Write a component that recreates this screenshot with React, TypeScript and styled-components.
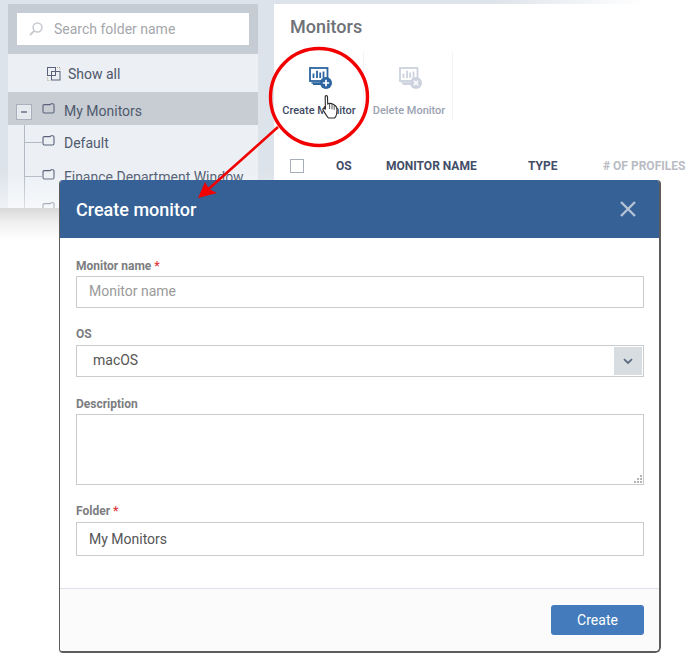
import React from "react";
import styled, { createGlobalStyle } from "styled-components";

const Global = createGlobalStyle`
  html, body { margin: 0; padding: 0; background: #fff; }
  body { font-family: Roboto, "Liberation Sans", sans-serif; }
  * { box-sizing: border-box; }
`;

const Stage = styled.div`
  position: relative;
  width: 700px;
  height: 653px;
  overflow: hidden;
  background: #fff;
`;

const Backdrop = styled.div`
  position: relative;
  height: 208px;
  padding: 4px 0 0 8px;
  display: flex;
  gap: 16px;
  background: linear-gradient(90deg, #dde3ea 0%, #dde3ea 70%, #ffffff 92%);
  overflow: hidden;
  &::after {
    content: "";
    position: absolute;
    left: 0;
    right: 0;
    bottom: 0;
    height: 36px;
    background: linear-gradient(180deg, rgba(255, 255, 255, 0), rgba(255, 255, 255, 0.55));
  }
`;

const BottomFade = styled.div`
  height: 32px;
  background: linear-gradient(180deg, #d9d9d9 0%, #f0f0f0 45%, #ffffff 100%);
  mask-image: linear-gradient(90deg, #000 70%, transparent 90%);
`;

const Sidebar = styled.aside`
  width: 250px;
  flex: none;
  background: #ecf0f5;
  display: flex;
  flex-direction: column;
`;

const SearchPanel = styled.div`
  height: 50px;
  flex: none;
  padding: 9px 9px;
  background: #c6ccd4;
`;

const SearchBox = styled.div`
  height: 32px;
  background: #fff;
  display: flex;
  align-items: center;
  gap: 11px;
  padding-left: 12px;
  font-size: 14px;
  color: #a4a7ab;
`;

const ShowAll = styled.div`
  height: 38px;
  flex: none;
  display: flex;
  align-items: center;
  gap: 7px;
  padding: 2px 0 0 39px;
  font-size: 14px;
  color: #4d5669;
`;

const TreeRow = styled.div<{ $active?: boolean; $h?: number }>`
  height: ${(p) => p.$h ?? 33}px;
  flex: none;
  display: flex;
  align-items: center;
  padding-top: ${(p) => (p.$active ? 4 : 0)}px;
  font-size: 14px;
  color: #4f5a6e;
  background: ${(p) => (p.$active ? "#c8cdd3" : "transparent")};
  white-space: nowrap;
`;

const Expander = styled.span`
  width: 16px;
  height: 16px;
  margin: 3px 10px 0 8px;
  flex: none;
  border: 1px solid #a9b0bd;
  background: #e6e9ee;
  display: flex;
  align-items: center;
  justify-content: center;
  &::before {
    content: "";
    width: 6px;
    height: 1.5px;
    background: #8a90a0;
  }
`;

const Connector = styled.span`
  width: 18px;
  align-self: stretch;
  margin-left: 16px;
  flex: none;
  background:
    linear-gradient(#b3b8c3, #b3b8c3) left center / 100% 1px no-repeat,
    linear-gradient(#b3b8c3, #b3b8c3) left top / 1px 100% no-repeat;
`;

const FolderSlot = styled.span`
  width: 14px;
  margin-right: 8px;
  margin-top: -4px;
  flex: none;
  display: flex;
`;

const Main = styled.main`
  flex: 1;
  background: #fff;
  padding: 0 0 0 16px;
  display: flex;
  flex-direction: column;
`;

const PageTitle = styled.h1`
  margin: 14px 0 0;
  font-size: 18px;
  line-height: 18px;
  font-weight: 500;
  color: #6e7177;
`;

const Toolbar = styled.div`
  margin: 16px 0 0 -15px;
  height: 68px;
  display: flex;
`;

const ToolButton = styled.div<{ $muted?: boolean }>`
  width: 89px;
  padding: 15px 0 0 ${(p) => (p.$muted ? 2 : 0)}px;
  display: flex;
  flex-direction: column;
  align-items: center;
  gap: 14px;
  font-size: 11px;
  line-height: 13px;
  font-weight: 500;
  white-space: nowrap;
  color: ${(p) => (p.$muted ? "#9ba2b1" : "#3f4a63")};
  border-right: 1px solid #f3f4f6;
  svg { margin-left: 3px; }
`;

const TableHead = styled.div`
  margin: 39px 0 0 0;
  display: grid;
  grid-template-columns: 46px 50px 142px 75px 90px;
  align-items: center;
  font-size: 12px;
  font-weight: 700;
  color: #434d67;
  white-space: nowrap;
`;

const Check = styled.span`
  width: 14px;
  height: 14px;
  border: 1px solid #a7adba;
  background: #fff;
`;

const FadedCol = styled.span`
  color: #b9bcc3;
`;

const Modal = styled.section`
  position: absolute;
  left: 59px;
  top: 180px;
  width: 602px;
  height: 473px;
  background: #fff;
  border: solid #5c5c5c;
  border-width: 0 2px 2px 1px;
  border-radius: 4px 4px 6px 4px;
  display: flex;
  flex-direction: column;
  overflow: hidden;
`;

const ModalHeader = styled.header`
  height: 58px;
  flex: none;
  background: #356197;
  display: flex;
  align-items: center;
  justify-content: space-between;
  padding: 0 24px 0 17px;
  margin: 0 -2px 0 -1px;
`;

const ModalTitle = styled.h2`
  margin: 0;
  font-size: 18px;
  font-weight: 500;
  color: #fff;
`;

const ModalBody = styled.div`
  flex: 1;
  padding: 21px 15px 0 16px;
  display: flex;
  flex-direction: column;
  gap: 19px;
`;

const Field = styled.div<{ $gap?: number; $tail?: number }>`
  display: flex;
  flex-direction: column;
  gap: ${(p) => p.$gap ?? 3}px;
  padding-bottom: ${(p) => p.$tail ?? 0}px;
`;

const Label = styled.label`
  font-size: 12px;
  line-height: 14px;
  font-weight: 700;
  color: #7b7d80;
`;

const Star = styled.span`
  color: #e0393e;
`;

const TextInput = styled.input<{ $h?: number; $lift?: number }>`
  height: ${(p) => p.$h ?? 32}px;
  width: 100%;
  padding: 0 12px ${(p) => p.$lift ?? 0}px;
  border: 1px solid #cbcbcb;
  border-radius: 0;
  outline: none;
  font: 400 14px Roboto, sans-serif;
  color: #555;
  background: #fff;
  &::placeholder { color: #9a9a9a; opacity: 1; }
`;

const SelectBox = styled.div`
  height: 32px;
  border: 1px solid #cbcbcb;
  padding: 1px 1px 1px 16px;
  display: flex;
  align-items: center;
  justify-content: space-between;
  font-size: 14px;
  line-height: 16px;
  color: #555;
`;

const SelectValue = styled.span`
  margin-top: -2px;
`;

const SelectArrow = styled.span`
  width: 28px;
  height: 100%;
  background: #d8dde1;
  display: flex;
  align-items: center;
  justify-content: center;
`;

const AreaWrap = styled.div`
  position: relative;
`;

const TextArea = styled.textarea`
  height: 71px;
  width: 100%;
  display: block;
  border: 1px solid #cbcbcb;
  border-radius: 0;
  outline: none;
  resize: none;
  background: #fff;
`;

const Grip = styled.svg`
  position: absolute;
  right: 2px;
  bottom: 2px;
`;

const ModalFooter = styled.footer`
  height: 63px;
  flex: none;
  background: #fbfbfc;
  border-top: 1px solid #dde2e8;
  display: flex;
  align-items: flex-start;
  justify-content: flex-end;
  padding: 16px 15px 0 0;
`;

const PrimaryButton = styled.button`
  width: 93px;
  height: 30px;
  border: none;
  border-radius: 3px;
  background: #437bbd;
  color: #fff;
  font: 400 14px Roboto, sans-serif;
`;

const AnnotationLayer = styled.svg`
  position: absolute;
  left: 0;
  top: 0;
  pointer-events: none;
`;

const HandCursor = styled.svg`
  position: absolute;
  left: 322px;
  top: 95px;
`;

const Folder = () => (
  <svg width="13" height="11" viewBox="0 0 13 11" fill="none">
    <path d="M1 2.8 Q1 1.6 2.2 1.6 L8 1.6 L9 .8 L10.8 .8 Q12 .8 12 2 L12 8.6 Q12 10 10.6 10 L2.4 10 Q1 10 1 8.6 Z" stroke="#59627a" strokeWidth="1.1" />
  </svg>
);

const SearchGlyph = () => (
  <svg width="14" height="14" viewBox="0 0 14 14" fill="none">
    <circle cx="8.5" cy="5.5" r="4.4" stroke="#c6cacf" strokeWidth="1.5" />
    <path d="M5.2 8.8 L1 13" stroke="#c6cacf" strokeWidth="1.8" />
  </svg>
);

const ShowAllGlyph = () => (
  <svg width="14" height="14" viewBox="0 0 14 14" fill="none">
    <rect x=".5" y=".5" width="8" height="8" stroke="#59627a" />
    <rect x="4.5" y="4.5" width="8.5" height="8.5" stroke="#59627a" />
    <path d="M10 .5h3v3M.5 10.5v3h3" stroke="#b5a98f" strokeDasharray="1 1" />
  </svg>
);

const MonitorGlyph = ({ color, badge, mark }: { color: string; badge: string; mark: "plus" | "x" }) => (
  <svg width="24" height="23" viewBox="0 0 24 23" fill="none">
    <rect x="1" y="1" width="17.5" height="13" stroke={color} strokeWidth="1.8" />
    <path d="M4.5 11V6.5M8 11V3.8M11.2 11V5.5M14.5 11V4.5" stroke={color} strokeWidth="1.8" />
    <path d="M4 17.4h9M2.5 16h9" stroke={color} strokeWidth="1.3" />
    <circle cx="17" cy="16" r="6" fill={badge} />
    {mark === "plus" ? (
      <path d="M17 12.8v6.4M13.8 16h6.4" stroke="#fff" strokeWidth="1.7" />
    ) : (
      <path d="M14.8 13.8l4.4 4.4M19.2 13.8l-4.4 4.4" stroke="#fff" strokeWidth="1.5" />
    )}
  </svg>
);

const Chevron = () => (
  <svg width="10" height="7" viewBox="0 0 10 7" fill="none">
    <path d="M1 1.2 L5 5 L9 1.2" stroke="#5a6b80" strokeWidth="1.8" />
  </svg>
);

const CloseGlyph = () => (
  <svg width="18" height="18" viewBox="0 0 18 18" fill="none">
    <path d="M2 2 L16 16 M16 2 L2 16" stroke="#b4c2d4" strokeWidth="2.4" />
  </svg>
);

export default function App() {
  return (
    <Stage>
      <Global />
      <Backdrop>
        <Sidebar>
          <SearchPanel>
            <SearchBox>
              <SearchGlyph />
              Search folder name
            </SearchBox>
          </SearchPanel>
          <ShowAll>
            <ShowAllGlyph />
            Show all
          </ShowAll>
          <TreeRow $active>
            <Expander />
            <FolderSlot><Folder /></FolderSlot>
            My Monitors
          </TreeRow>
          <TreeRow $h={35}>
            <Connector />
            <FolderSlot><Folder /></FolderSlot>
            Default
          </TreeRow>
          <TreeRow>
            <Connector />
            <FolderSlot><Folder /></FolderSlot>
            Finance Department Window...
          </TreeRow>
          <TreeRow>
            <Connector />
            <FolderSlot><Folder /></FolderSlot>
          </TreeRow>
        </Sidebar>
        <Main>
          <PageTitle>Monitors</PageTitle>
          <Toolbar>
            <ToolButton>
              <MonitorGlyph color="#2c659f" badge="#2c659f" mark="plus" />
              Create Monitor
            </ToolButton>
            <ToolButton $muted>
              <MonitorGlyph color="#cdd3de" badge="#cdd3de" mark="x" />
              Delete Monitor
            </ToolButton>
          </Toolbar>
          <TableHead>
            <Check />
            <span>OS</span>
            <span>MONITOR NAME</span>
            <span>TYPE</span>
            <FadedCol># OF PROFILES</FadedCol>
          </TableHead>
        </Main>
      </Backdrop>
      <BottomFade />

      <Modal>
        <ModalHeader>
          <ModalTitle>Create monitor</ModalTitle>
          <CloseGlyph />
        </ModalHeader>
        <ModalBody>
          <Field>
            <Label>Monitor name <Star>*</Star></Label>
            <TextInput placeholder="Monitor name" $lift={2} readOnly />
          </Field>
          <Field $gap={4} $tail={1}>
            <Label>OS</Label>
            <SelectBox>
              <SelectValue>macOS</SelectValue>
              <SelectArrow><Chevron /></SelectArrow>
            </SelectBox>
          </Field>
          <Field>
            <Label>Description</Label>
            <AreaWrap>
              <TextArea readOnly />
              <Grip width="8" height="8" viewBox="0 0 8 8" fill="#b5b5b5">
                <rect x="6" y="0" width="2" height="2" />
                <rect x="3" y="3" width="2" height="2" />
                <rect x="6" y="3" width="2" height="2" />
                <rect x="0" y="6" width="2" height="2" />
                <rect x="3" y="6" width="2" height="2" />
                <rect x="6" y="6" width="2" height="2" />
              </Grip>
            </AreaWrap>
          </Field>
          <Field $gap={4}>
            <Label>Folder <Star>*</Star></Label>
            <TextInput $h={34} value="My Monitors" readOnly />
          </Field>
        </ModalBody>
        <ModalFooter>
          <PrimaryButton>Create</PrimaryButton>
        </ModalFooter>
      </Modal>

      <AnnotationLayer width="700" height="653" viewBox="0 0 700 653" fill="none">
        <circle cx="319" cy="97" r="48.5" stroke="#f20000" strokeWidth="3.4" />
        <path d="M278 127 L203 194" stroke="#f20000" strokeWidth="2.6" />
        <path d="M198 198 L205 182 L209 189 L217 193 Z" fill="#f20000" />
      </AnnotationLayer>

      <HandCursor width="16" height="24" viewBox="0 0 16 24">
        <path
          d="M3.2 1.8 Q3.2 .6 4.3 .6 Q5.5 .6 5.5 1.8 L5.7 9 L7.5 8.2 L9.6 8.6 L11.5 9.6 L13.4 10.8 Q15 12 15 15 L14.6 19 Q14 22 12.6 23 L6.4 23 L4.4 20.4 L1.4 15.6 Q.4 13.6 1.4 13.2 Q2.4 12.8 3.4 14.6 Z"
          fill="#fff"
          stroke="#2a2a2a"
          strokeWidth="1.1"
        />
        <path d="M7.6 9v5M10 9v5.4M12.2 10.4v4.4" stroke="#444" strokeWidth=".9" />
      </HandCursor>
    </Stage>
  );
}
